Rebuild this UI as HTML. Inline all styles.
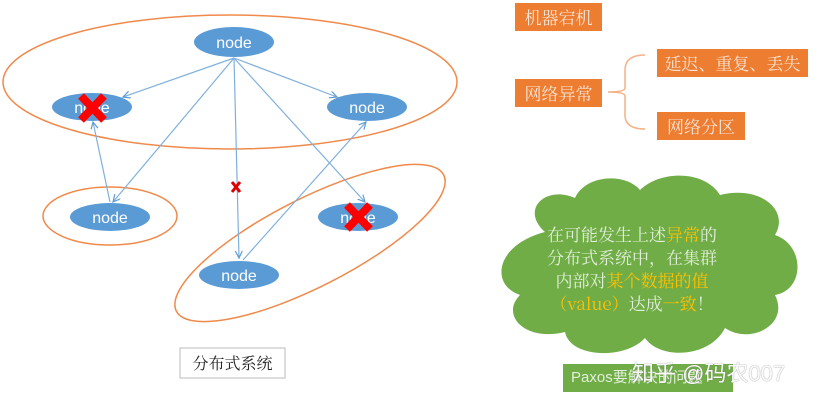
<!DOCTYPE html>
<html><head><meta charset="utf-8"><style>
body{margin:0;width:823px;height:404px;background:#fff;overflow:hidden;position:relative;font-family:"Liberation Sans","Noto Sans CJK SC",sans-serif}
.ob{position:absolute;background:#ed7d31;color:#fbe5d6;font-size:17px;line-height:28px;text-align:center;font-family:"Noto Serif CJK SC","Noto Sans CJK SC",serif}
.cl{position:absolute;left:505px;top:222px;width:254px;text-align:center;color:#e2efda;font-size:17px;line-height:23px;font-family:"Noto Serif CJK SC","Noto Sans CJK SC",serif}
.y{color:#ffc000}
</style></head><body>
<svg width="823" height="404" style="position:absolute;left:0;top:0">
<defs><marker id="a" markerWidth="8" markerHeight="8" refX="6" refY="3" orient="auto"><path d="M0,0 L6,3 L0,6" fill="none" stroke="#5b9bd5" stroke-width="1"/></marker></defs>
<g fill="none" stroke-width="1.5">
<ellipse cx="230" cy="82" rx="227" ry="67" stroke="#f08a4b"/>
<ellipse cx="110" cy="216" rx="67" ry="29" stroke="#f08a4b"/>
<ellipse cx="310" cy="243" rx="150" ry="44" transform="rotate(-27 310 243)" stroke="#f08a4b"/>
</g>
<g stroke="#7fb0dd" stroke-width="1.2" marker-end="url(#a)">
<line x1="234" y1="58" x2="123" y2="97"/>
<line x1="234" y1="58" x2="113" y2="202"/>
<line x1="234" y1="58" x2="239" y2="258"/>
<line x1="234" y1="58" x2="365" y2="202"/>
<line x1="234" y1="58" x2="337" y2="97"/>
<line x1="110" y1="202" x2="93" y2="122"/>
<line x1="243" y1="260" x2="366" y2="122"/>
</g>
<g fill="#5b9bd5">
<ellipse cx="234" cy="42" rx="40" ry="15"/>
<ellipse cx="92" cy="107" rx="40" ry="14"/>
<ellipse cx="367" cy="107" rx="40" ry="14"/>
<ellipse cx="110" cy="217" rx="40" ry="14"/>
<ellipse cx="239" cy="275" rx="40" ry="14"/>
<ellipse cx="358" cy="217" rx="40" ry="14"/>
</g>
<g fill="#fff" font-family="Liberation Sans,sans-serif" font-size="16" text-anchor="middle">
<text x="234" y="48">node</text><text x="92" y="113">node</text><text x="367" y="113">node</text>
<text x="110" y="223">node</text><text x="239" y="281">node</text><text x="358" y="223">node</text>
</g>
<g stroke="#f00" stroke-width="8">
<path d="M81,96 L104,120 M104,96 L81,120"/>
<path d="M347,205 L370,229 M370,205 L347,229"/>
</g>
<path d="M232,182 L240,192 M240,182 L232,192" stroke="#d00" stroke-width="3"/>
<path d="M645,55 Q625,55 625,70 L625,88 Q625,92 608,92 Q625,92 625,96 L625,115 Q625,129 645,129" fill="none" stroke="#f4b183" stroke-width="1.5"/>
<path d="M545,232 C520,210 545,185 575,198 C585,175 625,172 640,190 C660,170 705,170 720,195 C760,185 790,210 775,235 C805,245 805,290 775,295 C790,325 750,345 725,328 C710,358 660,360 645,338 C625,360 570,358 565,332 C525,342 500,315 520,295 C490,285 495,245 545,232 Z" fill="#70ad47"/>
<rect x="180" y="348" width="105" height="30" fill="#fff" stroke="#bbb"/>
</svg>
<div style="position:absolute;left:180px;top:348px;width:105px;line-height:30px;text-align:center;font-size:16px;color:#222;font-family:'Noto Serif CJK SC',serif">分布式系统</div>
<div class="ob" style="left:515px;top:3px;width:87px">机器宕机</div>
<div class="ob" style="left:515px;top:79px;width:87px">网络异常</div>
<div class="ob" style="left:657px;top:49px;width:151px">延迟、重复、丢失</div>
<div class="ob" style="left:657px;top:112px;width:88px">网络分区</div>
<div class="cl">在可能发生上述<span class="y">异常</span>的<br>分布式系统中，在集群<br>内部对<span class="y">某个数据的值</span><br><span class="y">（value）</span>达成<span class="y">一致</span>！</div>
<div style="position:absolute;left:563px;top:364px;width:170px;height:28px;background:#70ad47;color:#e2efda;font-size:15px;line-height:28px;padding-left:8px;box-sizing:border-box">Paxos要解决的问题</div>
<div style="position:absolute;left:632px;top:356px;font-size:22px;color:#fafafa;text-shadow:0 0 1px #666">知乎 @码农007</div>
</body></html>
